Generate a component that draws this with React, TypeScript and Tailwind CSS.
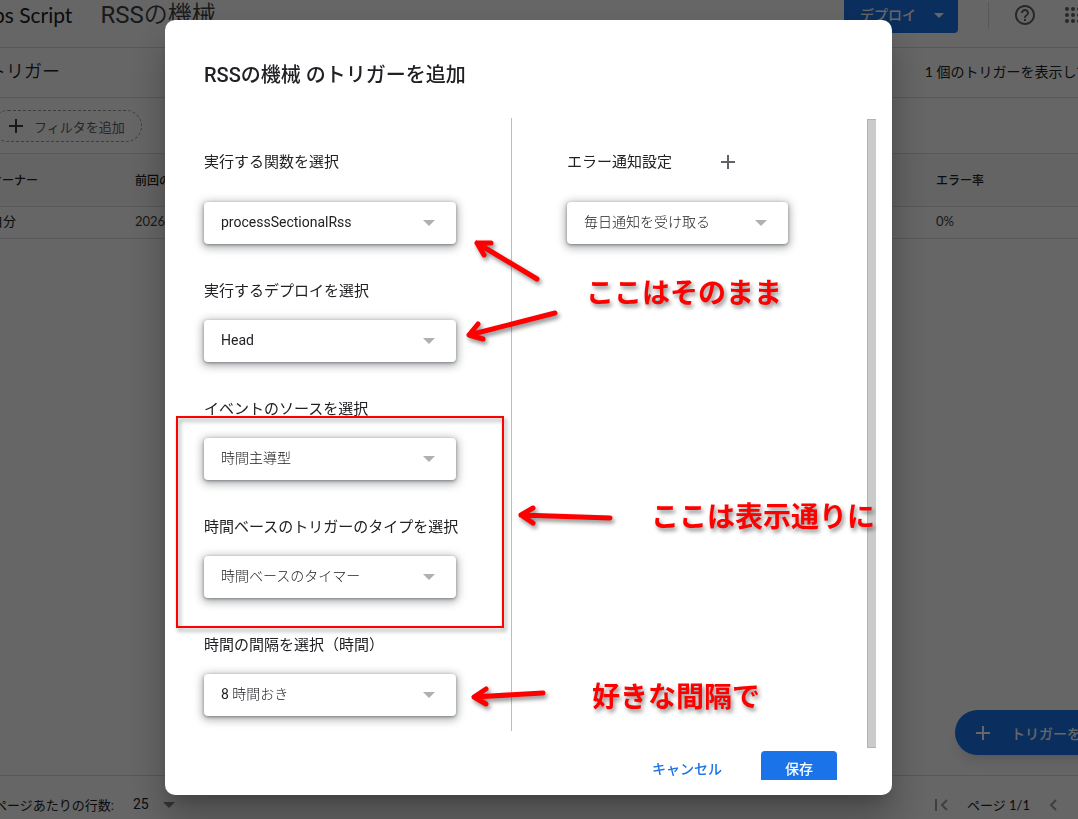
import React from 'react'

type SelectFieldProps = {
  id: string
  label: string
  options: string[]
}

const SelectBox = ({ id, options }: { id: string; options: string[] }) => {
  return (
    <div className='relative h-[42px] rounded-[4px] bg-white shadow-[0_1px_3px_rgba(60,64,67,0.5),0_2px_9px_2px_rgba(60,64,67,0.4)]'>
      <select
        id={id}
        className='h-full w-full appearance-none rounded-[4px] bg-transparent pb-[2px] pl-[17px] pr-10 font-[Roboto,"Noto_Sans_CJK_JP_Light","Noto_Sans_CJK_JP",sans-serif] text-sm text-[#202124] outline-none'
      >
        {options.map((option) => (
          <option key={option}>{option}</option>
        ))}
      </select>
      <svg className='pointer-events-none absolute right-[21px] top-[18px]' width='12' height='6' viewBox='0 0 12 6'>
        <path d='M0 0h12L6 6z' fill='#b0b0b0' />
      </svg>
    </div>
  )
}

const SelectField = ({ id, label, options }: SelectFieldProps) => {
  return (
    <div className='w-[252px]'>
      <label htmlFor={id} className='mb-[17px] block whitespace-nowrap text-[15px] leading-6 text-[#202124]'>
        {label}
      </label>
      <SelectBox id={id} options={options} />
    </div>
  )
}

const PlusIcon = ({ className }: { className?: string }) => {
  return (
    <svg className={className} width='14' height='14' viewBox='0 0 14 14'>
      <path d='M7 0v14M0 7h14' stroke='currentColor' strokeWidth='2' />
    </svg>
  )
}

const Header = () => {
  return (
    <header className='flex h-12 shrink-0 items-center justify-between border-b border-[#dadce0] pb-[17px]'>
      <div className='-ml-[33px] flex items-center gap-7 whitespace-nowrap'>
        <p className='font-[Lato,"Noto_Sans_CJK_JP",sans-serif] text-[21px] leading-7 text-[#202124]'>Apps Script</p>
        <h1 className='font-[Roboto,"Noto_Sans_CJK_JP_DemiLight","Noto_Sans_CJK_JP_Light","Noto_Sans_CJK_JP",sans-serif] text-2xl leading-7 text-[#3c4043]'>
          RSSの機械
        </h1>
      </div>
      <div className='-mr-[7px] flex shrink-0 items-center'>
        <button className='flex h-9 w-[114px] shrink-0 items-center gap-[18px] rounded-[4px] bg-[#1a73e8] pl-4 text-sm font-medium text-white'>
          デプロイ
          <svg width='10' height='5' viewBox='0 0 10 5'>
            <path d='M0 0h10L5 5z' fill='currentColor' />
          </svg>
        </button>
        <div className='ml-[30px] h-[27px] w-px bg-[#dadce0]' />
        <button aria-label='ヘルプ' className='ml-6 text-[#5f6368]'>
          <svg width='24' height='24' viewBox='0 0 24 24' fill='currentColor'>
            <path d='M11 18h2v-2h-2v2zm1-16C6.48 2 2 6.48 2 12s4.48 10 10 10 10-4.48 10-10S17.52 2 12 2zm0 18c-4.41 0-8-3.59-8-8s3.59-8 8-8 8 3.59 8 8-3.59 8-8 8zm0-14c-2.21 0-4 1.79-4 4h2c0-1.1.9-2 2-2s2 .9 2 2c0 2-3 1.75-3 5h2c0-2.25 3-2.5 3-5 0-2.21-1.79-4-4-4z' />
          </svg>
        </button>
        <button aria-label='アプリ' className='ml-6 text-[#5f6368]'>
          <svg width='24' height='24' viewBox='0 0 24 24' fill='currentColor'>
            <path d='M6 8a2 2 0 1 0 0-4 2 2 0 0 0 0 4zm6 0a2 2 0 1 0 0-4 2 2 0 0 0 0 4zm6 0a2 2 0 1 0 0-4 2 2 0 0 0 0 4zM6 14a2 2 0 1 0 0-4 2 2 0 0 0 0 4zm6 0a2 2 0 1 0 0-4 2 2 0 0 0 0 4zm6 0a2 2 0 1 0 0-4 2 2 0 0 0 0 4zM6 20a2 2 0 1 0 0-4 2 2 0 0 0 0 4zm6 0a2 2 0 1 0 0-4 2 2 0 0 0 0 4zm6 0a2 2 0 1 0 0-4 2 2 0 0 0 0 4z' />
          </svg>
        </button>
      </div>
    </header>
  )
}

const TriggerPage = () => {
  return (
    <div className='relative flex h-screen flex-col overflow-hidden bg-white text-[#202124]'>
      <Header />

      <div className='flex h-[50px] shrink-0 items-center justify-between whitespace-nowrap border-b border-[#dadce0] pb-[2px]'>
        <h2 className='-ml-3 font-[Roboto,"Noto_Sans_CJK_JP_DemiLight","Noto_Sans_CJK_JP",sans-serif] text-lg leading-6'>トリガー</h2>
        <p className='-mr-3 font-[Lato,"Noto_Sans_CJK_JP",sans-serif] text-sm'>1 個のトリガーを表示して</p>
      </div>

      <div className='flex h-14 shrink-0 items-center border-b border-[#dadce0]'>
        <button className='-ml-2 flex h-8 items-center gap-[11px] rounded-full border border-dashed border-[#9aa0a6] pl-4 pr-4 text-[13px] text-[#5f6368]'>
          <PlusIcon className='text-[#3c4043]' />
          <span className='pt-1'>フィルタを追加</span>
        </button>
      </div>

      <table className='-ml-[10px] w-[calc(100%+10px)] table-fixed text-left'>
        <thead className='bg-[#fafafa]'>
          <tr className='h-[52px] border-b border-[#dadce0] text-xs'>
            <th className='w-[145px] pt-[2px] font-medium'>オーナー</th>
            <th className='w-[801px] pt-[2px] font-medium'>前回の実行</th>
            <th className='pt-[2px] font-medium'>エラー率</th>
          </tr>
        </thead>
        <tbody>
          <tr className='h-8 border-b border-[#dadce0] font-[Lato,"Noto_Sans_CJK_JP",sans-serif] text-[13px]'>
            <td>自分</td>
            <td className='text-[#3c4043]'>2026/01/10</td>
            <td className='text-[#3c4043]'>0%</td>
          </tr>
        </tbody>
      </table>

      <div className='flex-1' />

      <footer className='flex h-11 shrink-0 items-center justify-between border-t border-[#dadce0] pt-[14px] text-[13px]'>
        <div className='-ml-[6px] flex items-center whitespace-nowrap'>
          <label htmlFor='rows' className='pt-[2px]'>ページあたりの行数:</label>
          <div className='relative ml-[19px]'>
            <select id='rows' className='w-[50px] appearance-none bg-transparent text-sm outline-none'>
              <option>25</option>
            </select>
            <svg className='pointer-events-none absolute right-2 top-2' width='12' height='6' viewBox='0 0 12 6'>
              <path d='M0 0h12L6 6z' fill='#80868b' />
            </svg>
          </div>
        </div>
        <div className='flex items-center gap-[19px] pr-[21px]'>
          <button aria-label='最初のページ' className='text-[#9aa0a6]'>
            <svg width='13' height='12' viewBox='0 0 13 12' fill='none' stroke='currentColor' strokeWidth='2'>
              <path d='M1 0v12M12 1L7 6l5 5' />
            </svg>
          </button>
          <span className='pt-[2px] font-[Lato,"Noto_Sans_CJK_JP",sans-serif]'>ページ 1/1</span>
          <button aria-label='前のページ' className='text-[#9aa0a6]'>
            <svg width='8' height='12' viewBox='0 0 8 12' fill='none' stroke='currentColor' strokeWidth='2'>
              <path d='M7 1L2 6l5 5' />
            </svg>
          </button>
        </div>
      </footer>

      <button className='absolute -right-[67px] bottom-16 flex h-[45px] w-[190px] items-center gap-[21px] whitespace-nowrap rounded-full bg-[#1a73e8] pl-[21px] text-sm font-medium text-white shadow-lg'>
        <PlusIcon />
        <span className='pt-[2px]'>トリガーを追加</span>
      </button>
    </div>
  )
}

// Red arrows, frame and notes drawn over the dialog
const Annotations = () => {
  return (
    <div className='pointer-events-none absolute inset-0'>
      <div className='absolute left-[11px] top-[396px] h-[212px] w-[328px] border-2 border-[#f00] drop-shadow-[2px_3px_2px_rgba(0,0,0,0.4)]' />
      <svg
        className='absolute inset-0 h-full w-full drop-shadow-[2px_3px_2px_rgba(0,0,0,0.45)]'
        fill='none'
        stroke='#f00'
        strokeWidth='5'
        strokeLinecap='round'
        strokeLinejoin='round'
      >
        <path d='M372 259L312 223M326 223H312L319 235' />
        <path d='M390 293L304 315M313 304L304 315L318 319' />
        <path d='M445 498L356 495M368 488L356 495L368 503' />
        <path d='M378 673L309 677M321 669L309 677L321 684' />
      </svg>
      <div className='whitespace-nowrap text-[28px] font-bold leading-8 text-[#f00] [text-shadow:2px_3px_4px_rgba(0,0,0,0.45)]'>
        <p className='absolute left-[421px] top-[258px]'>ここはそのまま</p>
        <p className='absolute left-[486px] top-[482px]'>ここは表示通りに</p>
        <p className='absolute left-[427px] top-[662px]'>好きな間隔で</p>
      </div>
    </div>
  )
}

const TriggerDialog = () => {
  return (
    <div className='fixed inset-0 flex bg-black/60 pb-6 pl-[165px] pr-[186px] pt-5'>
      <div
        role='dialog'
        aria-labelledby='dialog-title'
        className='relative flex flex-1 flex-col rounded-[10px] bg-white shadow-[0_11px_15px_-7px_rgba(0,0,0,0.2),0_24px_38px_3px_rgba(0,0,0,0.25)]'
      >
        <h2 id='dialog-title' className='h-[98px] shrink-0 pl-[39px] pt-[41px] text-xl font-medium leading-7 text-[#202124]'>
          RSSの機械 のトリガーを追加
        </h2>

        <div className='flex min-h-0 flex-1 pl-[39px] pr-4'>
          <div className='mb-[17px] flex w-[308px] shrink-0 flex-col gap-[35px] border-r border-[#bdbdbd] pt-8'>
            <div className='w-[252px]'>
              <label htmlFor='fn' className='mb-7 block text-[15px] leading-6 text-[#202124]'>
                実行する関数を選択
              </label>
              <SelectBox id='fn' options={['processSectionalRss']} />
            </div>
            <SelectField id='deploy' label='実行するデプロイを選択' options={['Head']} />
            <SelectField id='source' label='イベントのソースを選択' options={['時間主導型']} />
            <SelectField id='type' label='時間ベースのトリガーのタイプを選択' options={['時間ベースのタイマー']} />
            <SelectField id='interval' label='時間の間隔を選択（時間）' options={['8 時間おき']} />
          </div>

          <div className='flex-1 pl-[55px] pt-8'>
            <div className='mb-7 flex items-center gap-[49px] text-[15px] leading-6 text-[#202124]'>
              <label htmlFor='notify'>エラー通知設定</label>
              <button aria-label='通知を追加' className='text-[#5f6368]'>
                <PlusIcon />
              </button>
            </div>
            <div className='w-[221px]'>
              <SelectBox id='notify' options={['毎日通知を受け取る']} />
            </div>
          </div>

          <div className='mt-px w-[9px] border border-r-0 border-[#b3b3b3] bg-[#cbcbcb]' />
        </div>

        <div className='mb-[15px] mt-[3px] flex h-[29px] shrink-0 justify-end gap-[23px] overflow-hidden pr-[55px] text-sm font-medium'>
          <button className='h-9 px-4 text-[#1a73e8]'>キャンセル</button>
          <button className='h-9 w-[76px] rounded-[4px] bg-[#1a73e8] text-white'>保存</button>
        </div>

        <Annotations />
      </div>
    </div>
  )
}

const App = () => {
  return (
    <div className='font-[Roboto,"Noto_Sans_CJK_JP",sans-serif]'>
      <TriggerPage />
      <TriggerDialog />
    </div>
  )
}

export default App
